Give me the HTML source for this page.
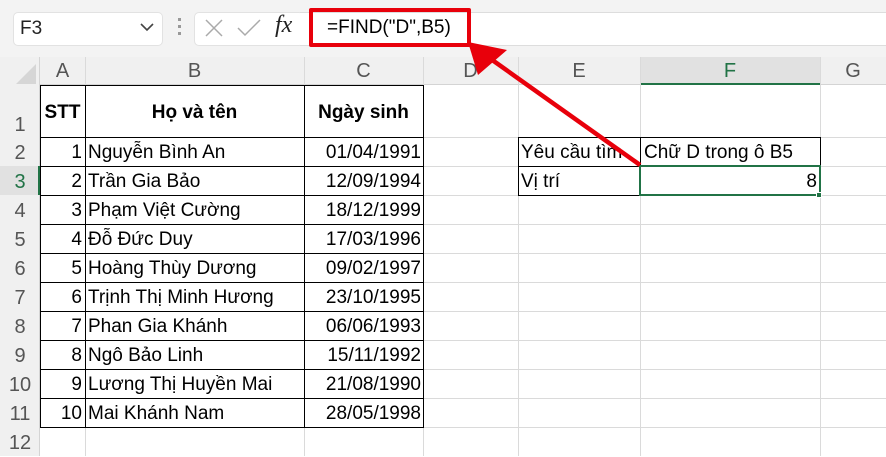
<!DOCTYPE html>
<html><head><meta charset="utf-8"><style>
*{margin:0;padding:0;box-sizing:border-box}
body{width:886px;height:456px;overflow:hidden;background:#fff;font-family:"Liberation Sans",Arial,sans-serif;position:relative;color:#000}
.a{position:absolute}
.t{position:absolute;font-size:19px;line-height:29px;white-space:nowrap}
.h{position:absolute;font-size:20px;color:#555;text-align:center;line-height:28px}
.gv{position:absolute;width:1px;background:#dadada}
.gh{position:absolute;height:1px;background:#dadada}
.bv{position:absolute;width:1px;background:#000}
.bh{position:absolute;height:1px;background:#000}
</style></head><body>
<div class="a" style="left:0;top:0;width:886px;height:57px;background:#f3f3f3"></div>
<div class="a" style="left:13px;top:12px;width:150px;height:34px;background:#fff;border:1px solid #e2e2e2;border-radius:5px"></div>
<div class="t" style="left:20px;top:14px;color:#222">F3</div>
<svg class="a" style="left:140px;top:22px" width="14" height="10"><path d="M1 2 L7 8 L13 2" fill="none" stroke="#444" stroke-width="1.6"/></svg>
<div class="a" style="left:178px;top:18px;width:3px;height:3px;background:#999"></div>
<div class="a" style="left:178px;top:25px;width:3px;height:3px;background:#999"></div>
<div class="a" style="left:178px;top:32px;width:3px;height:3px;background:#999"></div>
<div class="a" style="left:194px;top:12px;width:110px;height:34px;background:#fff;border:1px solid #e2e2e2;border-radius:5px"></div>
<svg class="a" style="left:200px;top:16px" width="100" height="28"><path d="M6 4 L22 20 M22 4 L6 20" stroke="#aaa" stroke-width="1.5"/><path d="M38 12 L45 19 L60 4" fill="none" stroke="#aaa" stroke-width="1.5"/></svg>
<div class="a" style="left:275px;top:12px;font-family:'Liberation Serif',serif;font-style:italic;font-size:24px;color:#222">fx</div>
<div class="a" style="left:300px;top:12px;width:586px;height:34px;background:#fff;border-top:1px solid #ddd;border-bottom:1px solid #ddd"></div>
<div class="a" style="left:309px;top:8px;width:162px;height:39px;border:4px solid #e8000b;border-radius:2px"></div>
<div class="t" style="left:327px;top:13px;font-size:19px">=FIND("D",B5)</div>
<div class="a" style="left:0;top:57px;width:886px;height:28px;background:#f0f0f0;border-bottom:1px solid #d4d4d4"></div>
<div class="a" style="left:0;top:57px;width:40px;height:399px;background:#f0f0f0;border-right:1px solid #d4d4d4"></div>
<svg class="a" style="left:16px;top:64px" width="20" height="20"><path d="M20 0 L20 20 L0 20 Z" fill="#d6d6d6"/></svg>
<div class="a" style="left:640px;top:57px;width:180px;height:28px;background:#e1e1e1;border-bottom:2px solid #217346"></div>
<div class="h" style="left:40px;top:57px;width:45px">A</div>
<div class="h" style="left:85px;top:57px;width:219px">B</div>
<div class="h" style="left:304px;top:57px;width:119px">C</div>
<div class="h" style="left:423px;top:57px;width:95px">D</div>
<div class="h" style="left:518px;top:57px;width:122px">E</div>
<div class="h" style="left:640px;top:57px;width:180px;color:#217346">F</div>
<div class="h" style="left:820px;top:57px;width:66px">G</div>
<div class="gv" style="left:85px;top:57px;height:28px"></div><div class="gv" style="left:304px;top:57px;height:28px"></div><div class="gv" style="left:423px;top:57px;height:28px"></div><div class="gv" style="left:518px;top:57px;height:28px"></div><div class="gv" style="left:640px;top:57px;height:28px"></div><div class="gv" style="left:820px;top:57px;height:28px"></div>
<div class="h" style="left:0;top:111px;width:40px">1</div>
<div class="h" style="left:0;top:139px;width:40px">2</div>
<div class="a" style="left:0;top:166px;width:40px;height:29px;background:#e1e1e1;border-right:2px solid #217346"></div>
<div class="h" style="left:0;top:168px;width:40px;color:#217346">3</div>
<div class="h" style="left:0;top:197px;width:40px">4</div>
<div class="h" style="left:0;top:226px;width:40px">5</div>
<div class="h" style="left:0;top:255px;width:40px">6</div>
<div class="h" style="left:0;top:284px;width:40px">7</div>
<div class="h" style="left:0;top:313px;width:40px">8</div>
<div class="h" style="left:0;top:342px;width:40px">9</div>
<div class="h" style="left:0;top:371px;width:40px">10</div>
<div class="h" style="left:0;top:400px;width:40px">11</div>
<div class="h" style="left:0;top:429px;width:40px">12</div>
<div class="gv" style="left:518px;top:85px;height:371px"></div>
<div class="gv" style="left:640px;top:85px;height:371px"></div>
<div class="gv" style="left:820px;top:85px;height:371px"></div>
<div class="gv" style="left:85px;top:427px;height:29px"></div>
<div class="gv" style="left:304px;top:427px;height:29px"></div>
<div class="gv" style="left:423px;top:427px;height:29px"></div>
<div class="gh" style="left:40px;top:137px;width:846px"></div>
<div class="gh" style="left:40px;top:166px;width:846px"></div>
<div class="gh" style="left:40px;top:195px;width:846px"></div>
<div class="gh" style="left:40px;top:224px;width:846px"></div>
<div class="gh" style="left:40px;top:253px;width:846px"></div>
<div class="gh" style="left:40px;top:282px;width:846px"></div>
<div class="gh" style="left:40px;top:311px;width:846px"></div>
<div class="gh" style="left:40px;top:340px;width:846px"></div>
<div class="gh" style="left:40px;top:369px;width:846px"></div>
<div class="gh" style="left:40px;top:398px;width:846px"></div>
<div class="gh" style="left:40px;top:427px;width:846px"></div>
<div class="bv" style="left:40px;top:85px;height:343px"></div>
<div class="bv" style="left:85px;top:85px;height:343px"></div>
<div class="bv" style="left:304px;top:85px;height:343px"></div>
<div class="bv" style="left:423px;top:85px;height:343px"></div>
<div class="bh" style="left:40px;top:85px;width:384px"></div>
<div class="bh" style="left:40px;top:137px;width:384px"></div>
<div class="bh" style="left:40px;top:166px;width:384px"></div>
<div class="bh" style="left:40px;top:195px;width:384px"></div>
<div class="bh" style="left:40px;top:224px;width:384px"></div>
<div class="bh" style="left:40px;top:253px;width:384px"></div>
<div class="bh" style="left:40px;top:282px;width:384px"></div>
<div class="bh" style="left:40px;top:311px;width:384px"></div>
<div class="bh" style="left:40px;top:340px;width:384px"></div>
<div class="bh" style="left:40px;top:369px;width:384px"></div>
<div class="bh" style="left:40px;top:398px;width:384px"></div>
<div class="bh" style="left:40px;top:427px;width:384px"></div>
<div class="bv" style="left:518px;top:137px;height:59px"></div>
<div class="bv" style="left:640px;top:137px;height:59px"></div>
<div class="bv" style="left:820px;top:137px;height:59px"></div>
<div class="bh" style="left:518px;top:137px;width:303px"></div>
<div class="bh" style="left:518px;top:166px;width:303px"></div>
<div class="bh" style="left:518px;top:195px;width:303px"></div>
<div class="t" style="left:40px;top:98px;width:45px;text-align:center;font-weight:bold">STT</div>
<div class="t" style="left:85px;top:98px;width:219px;text-align:center;font-weight:bold">Họ và tên</div>
<div class="t" style="left:304px;top:98px;width:119px;text-align:center;font-weight:bold">Ngày sinh</div>
<div class="t" style="left:40px;top:138px;width:42px;text-align:right">1</div><div class="t" style="left:88px;top:138px">Nguyễn Bình An</div><div class="t" style="left:304px;top:138px;width:117px;text-align:right">01/04/1991</div>
<div class="t" style="left:40px;top:167px;width:42px;text-align:right">2</div><div class="t" style="left:88px;top:167px">Trần Gia Bảo</div><div class="t" style="left:304px;top:167px;width:117px;text-align:right">12/09/1994</div>
<div class="t" style="left:40px;top:196px;width:42px;text-align:right">3</div><div class="t" style="left:88px;top:196px">Phạm Việt Cường</div><div class="t" style="left:304px;top:196px;width:117px;text-align:right">18/12/1999</div>
<div class="t" style="left:40px;top:225px;width:42px;text-align:right">4</div><div class="t" style="left:88px;top:225px">Đỗ Đức Duy</div><div class="t" style="left:304px;top:225px;width:117px;text-align:right">17/03/1996</div>
<div class="t" style="left:40px;top:254px;width:42px;text-align:right">5</div><div class="t" style="left:88px;top:254px">Hoàng Thùy Dương</div><div class="t" style="left:304px;top:254px;width:117px;text-align:right">09/02/1997</div>
<div class="t" style="left:40px;top:283px;width:42px;text-align:right">6</div><div class="t" style="left:88px;top:283px">Trịnh Thị Minh Hương</div><div class="t" style="left:304px;top:283px;width:117px;text-align:right">23/10/1995</div>
<div class="t" style="left:40px;top:312px;width:42px;text-align:right">7</div><div class="t" style="left:88px;top:312px">Phan Gia Khánh</div><div class="t" style="left:304px;top:312px;width:117px;text-align:right">06/06/1993</div>
<div class="t" style="left:40px;top:341px;width:42px;text-align:right">8</div><div class="t" style="left:88px;top:341px">Ngô Bảo Linh</div><div class="t" style="left:304px;top:341px;width:117px;text-align:right">15/11/1992</div>
<div class="t" style="left:40px;top:370px;width:42px;text-align:right">9</div><div class="t" style="left:88px;top:370px">Lương Thị Huyền Mai</div><div class="t" style="left:304px;top:370px;width:117px;text-align:right">21/08/1990</div>
<div class="t" style="left:40px;top:399px;width:42px;text-align:right">10</div><div class="t" style="left:88px;top:399px">Mai Khánh Nam</div><div class="t" style="left:304px;top:399px;width:117px;text-align:right">28/05/1998</div>
<div class="t" style="left:521px;top:138px;width:118px;overflow:hidden">Yêu cầu tìm</div>
<div class="t" style="left:644px;top:138px">Chữ D trong ô B5</div>
<div class="t" style="left:521px;top:167px">Vị trí</div>
<div class="a" style="left:639px;top:165px;width:182px;height:31px;border:2px solid #217346"></div>
<div class="a" style="left:816px;top:192px;width:6px;height:6px;background:#217346;border:1px solid #fff"></div>
<div class="t" style="left:640px;top:167px;width:177px;text-align:right">8</div>
<svg class="a" style="left:0;top:0" width="886" height="456"><line x1="640" y1="165" x2="488" y2="57" stroke="#e8000b" stroke-width="4.5"/><path d="M468 42 L507 50 L478 75 Z" fill="#e8000b"/></svg>
</body></html>
